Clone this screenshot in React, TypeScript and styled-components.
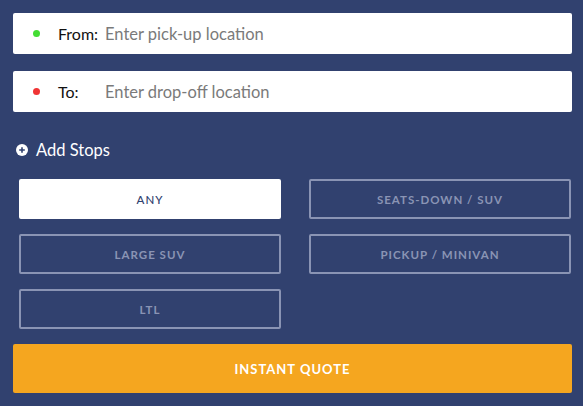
import styled, { createGlobalStyle } from "styled-components";

const GlobalStyle = createGlobalStyle`
  body {
    margin: 0;
    background-color: #31416f;
    font-family: Lato, "Open Sans", Arial, sans-serif;
  }
`;

const Form = styled.div`
  padding: 13px 11px 13px 13px;
  display: flex;
  flex-direction: column;
`;

const LocationField = styled.label<{ $spaced?: boolean }>`
  display: flex;
  align-items: center;
  height: 41px;
  background-color: #fff;
  border-radius: 2px;
  padding-left: 20px;
  margin-bottom: ${(p) => (p.$spaced ? "17px" : "0")};
`;

const Dot = styled.span<{ $color: string }>`
  width: 7px;
  height: 7px;
  border-radius: 50%;
  background-color: ${(p) => p.$color};
  margin-right: 18px;
`;

const FieldLabel = styled.span`
  width: 47px;
  font-size: 16px;
  color: #111;
`;

const FieldInput = styled.input`
  flex: 1;
  border: none;
  outline: none;
  background: transparent;
  font-family: inherit;
  font-size: 16.5px;
  color: #333;
  padding: 0;

  &::placeholder {
    color: #7a7a7a;
  }
`;

const AddStops = styled.button`
  display: flex;
  align-items: center;
  gap: 8px;
  background: none;
  border: none;
  color: #fff;
  font-family: inherit;
  font-size: 16.5px;
  padding: 0 0 0 3px;
  margin: 28px 0 19px;
  cursor: pointer;
`;

const VehicleGrid = styled.div`
  display: grid;
  grid-template-columns: 1fr 1fr;
  column-gap: 28px;
  row-gap: 15px;
  padding: 0 1px 0 6px;
  margin-bottom: 15px;
`;

const VehicleButton = styled.button<{ $active?: boolean }>`
  box-sizing: border-box;
  height: 40px;
  border-radius: 2px;
  border: 2px solid ${(p) => (p.$active ? "#fff" : "#8a94b4")};
  background-color: ${(p) => (p.$active ? "#fff" : "transparent")};
  color: ${(p) => (p.$active ? "#31416f" : "#8a94b4")};
  font-family: inherit;
  font-size: 11.5px;
  font-weight: ${(p) => (p.$active ? 500 : 700)};
  letter-spacing: 1px;
  text-transform: uppercase;
  cursor: pointer;
`;

const QuoteButton = styled.button`
  height: 49px;
  border: none;
  border-radius: 2px;
  background-color: #f5a61f;
  color: #fff;
  font-family: inherit;
  font-size: 13px;
  font-weight: 700;
  letter-spacing: 1px;
  cursor: pointer;
`;

const vehicles = ["Any", "Seats-down / SUV", "Large SUV", "Pickup / Minivan", "LTL"];

export default function App() {
  return (
    <>
      <GlobalStyle />
      <Form>
        <LocationField $spaced>
          <Dot $color="#44dd33" />
          <FieldLabel>From:</FieldLabel>
          <FieldInput placeholder="Enter pick-up location" />
        </LocationField>
        <LocationField>
          <Dot $color="#f03434" />
          <FieldLabel>To:</FieldLabel>
          <FieldInput placeholder="Enter drop-off location" />
        </LocationField>
        <AddStops>
          <svg width="12" height="12" viewBox="0 0 12 12">
            <circle cx="6" cy="6" r="6" fill="#fff" />
            <path d="M6 3.2v5.6M3.2 6h5.6" stroke="#31416f" strokeWidth="1.6" />
          </svg>
          Add Stops
        </AddStops>
        <VehicleGrid>
          {vehicles.map((v, i) => (
            <VehicleButton key={v} $active={i === 0}>
              {v}
            </VehicleButton>
          ))}
        </VehicleGrid>
        <QuoteButton>INSTANT QUOTE</QuoteButton>
      </Form>
    </>
  );
}
